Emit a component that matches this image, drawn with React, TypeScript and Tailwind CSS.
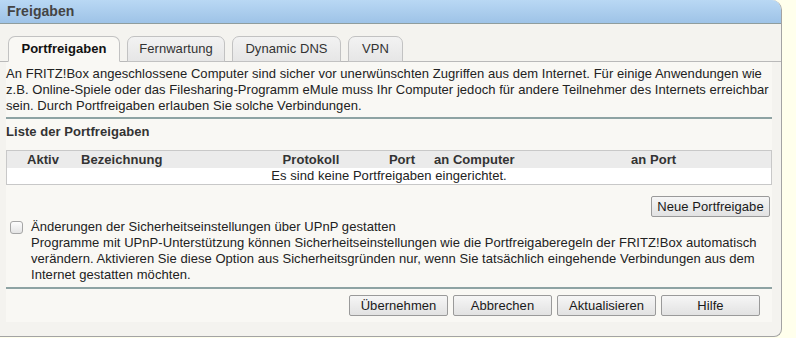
const tabs = [
  { label: 'Portfreigaben', width: 'w-[112px]', active: true },
  { label: 'Fernwartung', width: 'w-[98px]', active: false },
  { label: 'Dynamic DNS', width: 'w-[109px]', active: false },
  { label: 'VPN', width: 'w-[55px]', active: false },
];

const actions = ['Übernehmen', 'Abbrechen', 'Aktualisieren', 'Hilfe'];

function Button({ children, className = '' }: { children: React.ReactNode; className?: string }) {
  return (
    <button
      className={`h-[21px] rounded-[2px] border border-[#9a9a9a] bg-gradient-to-b from-[#f6f6f6] to-[#e2e2e2] text-[13px] leading-[19px] text-[#1a1a1a] ${className}`}
    >
      {children}
    </button>
  );
}

export default function App() {
  return (
    <div className="flex h-[338px] w-[796px] bg-[#ffffec] font-['Liberation_Sans',Arial,sans-serif] text-[13px] tracking-[0.05px] text-[#222]">
      <div className="flex h-[337px] w-[782px] flex-col overflow-hidden rounded-tr-[10px] rounded-br-[8px] border-r border-b border-[#a3a3a3] bg-[#f4f3ef]">
        {/* header */}
        <div className="h-[24px] shrink-0 border-b border-[#8f9d9d] bg-gradient-to-b from-[#b9d8f4] to-[#9ec3e7] pl-[7px] text-[14px] font-bold leading-[22px] text-[#444]">
          Freigaben
        </div>

        {/* tabs */}
        <div className="mt-[12px] flex h-[26px] shrink-0 items-end gap-[7px] border-b border-[#b9b9b9] pl-[8px]">
          {tabs.map((t) => (
            <div
              key={t.label}
              className={`${t.width} -mb-px flex h-[26px] items-center justify-center rounded-t-[7px] border border-[#c2c2c2] ${
                t.active
                  ? 'border-b-[#f9f8f4] bg-[#f9f8f4] font-bold text-[#111]'
                  : 'bg-gradient-to-b from-[#f2f2f2] to-[#e6e6e6] text-[#333]'
              }`}
            >
              {t.label}
            </div>
          ))}
        </div>

        {/* content */}
        <div className="ml-[6px] flex w-[766px] flex-col bg-[#f9f8f4] pb-[6px] pt-[4px] leading-[16px]">
          <p>
            An FRITZ!Box angeschlossene Computer sind sicher vor unerwünschten Zugriffen aus dem Internet. Für einige Anwendungen wie
            z.B. Online-Spiele oder das Filesharing-Programm eMule muss Ihr Computer jedoch für andere Teilnehmer des Internets erreichbar
            sein. Durch Portfreigaben erlauben Sie solche Verbindungen.
          </p>
          <div className="mt-[3px] border-t-2 border-[#8ea3a3]" />

          <h2 className="mt-[5px] font-bold text-[#333]">Liste der Portfreigaben</h2>

          <div className="mt-[10px] border border-[#c8c8c8] bg-white">
            <div className="grid h-[17px] grid-cols-[72px_172px_120px_62px_196px_1fr] items-center bg-[#ebebeb] font-bold text-[#333]">
              <span className="text-center">Aktiv</span>
              <span className="pl-[2px]">Bezeichnung</span>
              <span className="text-center">Protokoll</span>
              <span className="text-center">Port</span>
              <span className="pl-[1px]">an Computer</span>
              <span className="pl-[2px]">an Port</span>
            </div>
            <div className="h-[16px] text-center">Es sind keine Portfreigaben eingerichtet.</div>
          </div>

          <div className="mt-[11px] flex justify-end pr-[2px]">
            <Button className="w-[119px]">Neue Portfreigabe</Button>
          </div>

          <div className="mt-[2px] flex">
            <span className="ml-[4px] mr-[8px] mt-[2px] h-[13px] w-[13px] shrink-0 rounded-[3px] border border-[#a6a6a6] bg-gradient-to-b from-[#fdfdfd] to-[#e4e4e4]" />
            <div>
              <div>Änderungen der Sicherheitseinstellungen über UPnP gestatten</div>
              <div>
                Programme mit UPnP-Unterstützung können Sicherheitseinstellungen wie die Portfreigaberegeln der FRITZ!Box automatisch
                verändern. Aktivieren Sie diese Option aus Sicherheitsgründen nur, wenn Sie tatsächlich eingehende Verbindungen aus dem
                Internet gestatten möchten.
              </div>
            </div>
          </div>

          <div className="mt-[4px] border-t-2 border-[#8ea3a3]" />

          <div className="mt-[6px] flex justify-end gap-[5px] pr-[12px]">
            {actions.map((a) => (
              <Button key={a} className="w-[99px]">
                {a}
              </Button>
            ))}
          </div>
        </div>
      </div>
    </div>
  );
}
